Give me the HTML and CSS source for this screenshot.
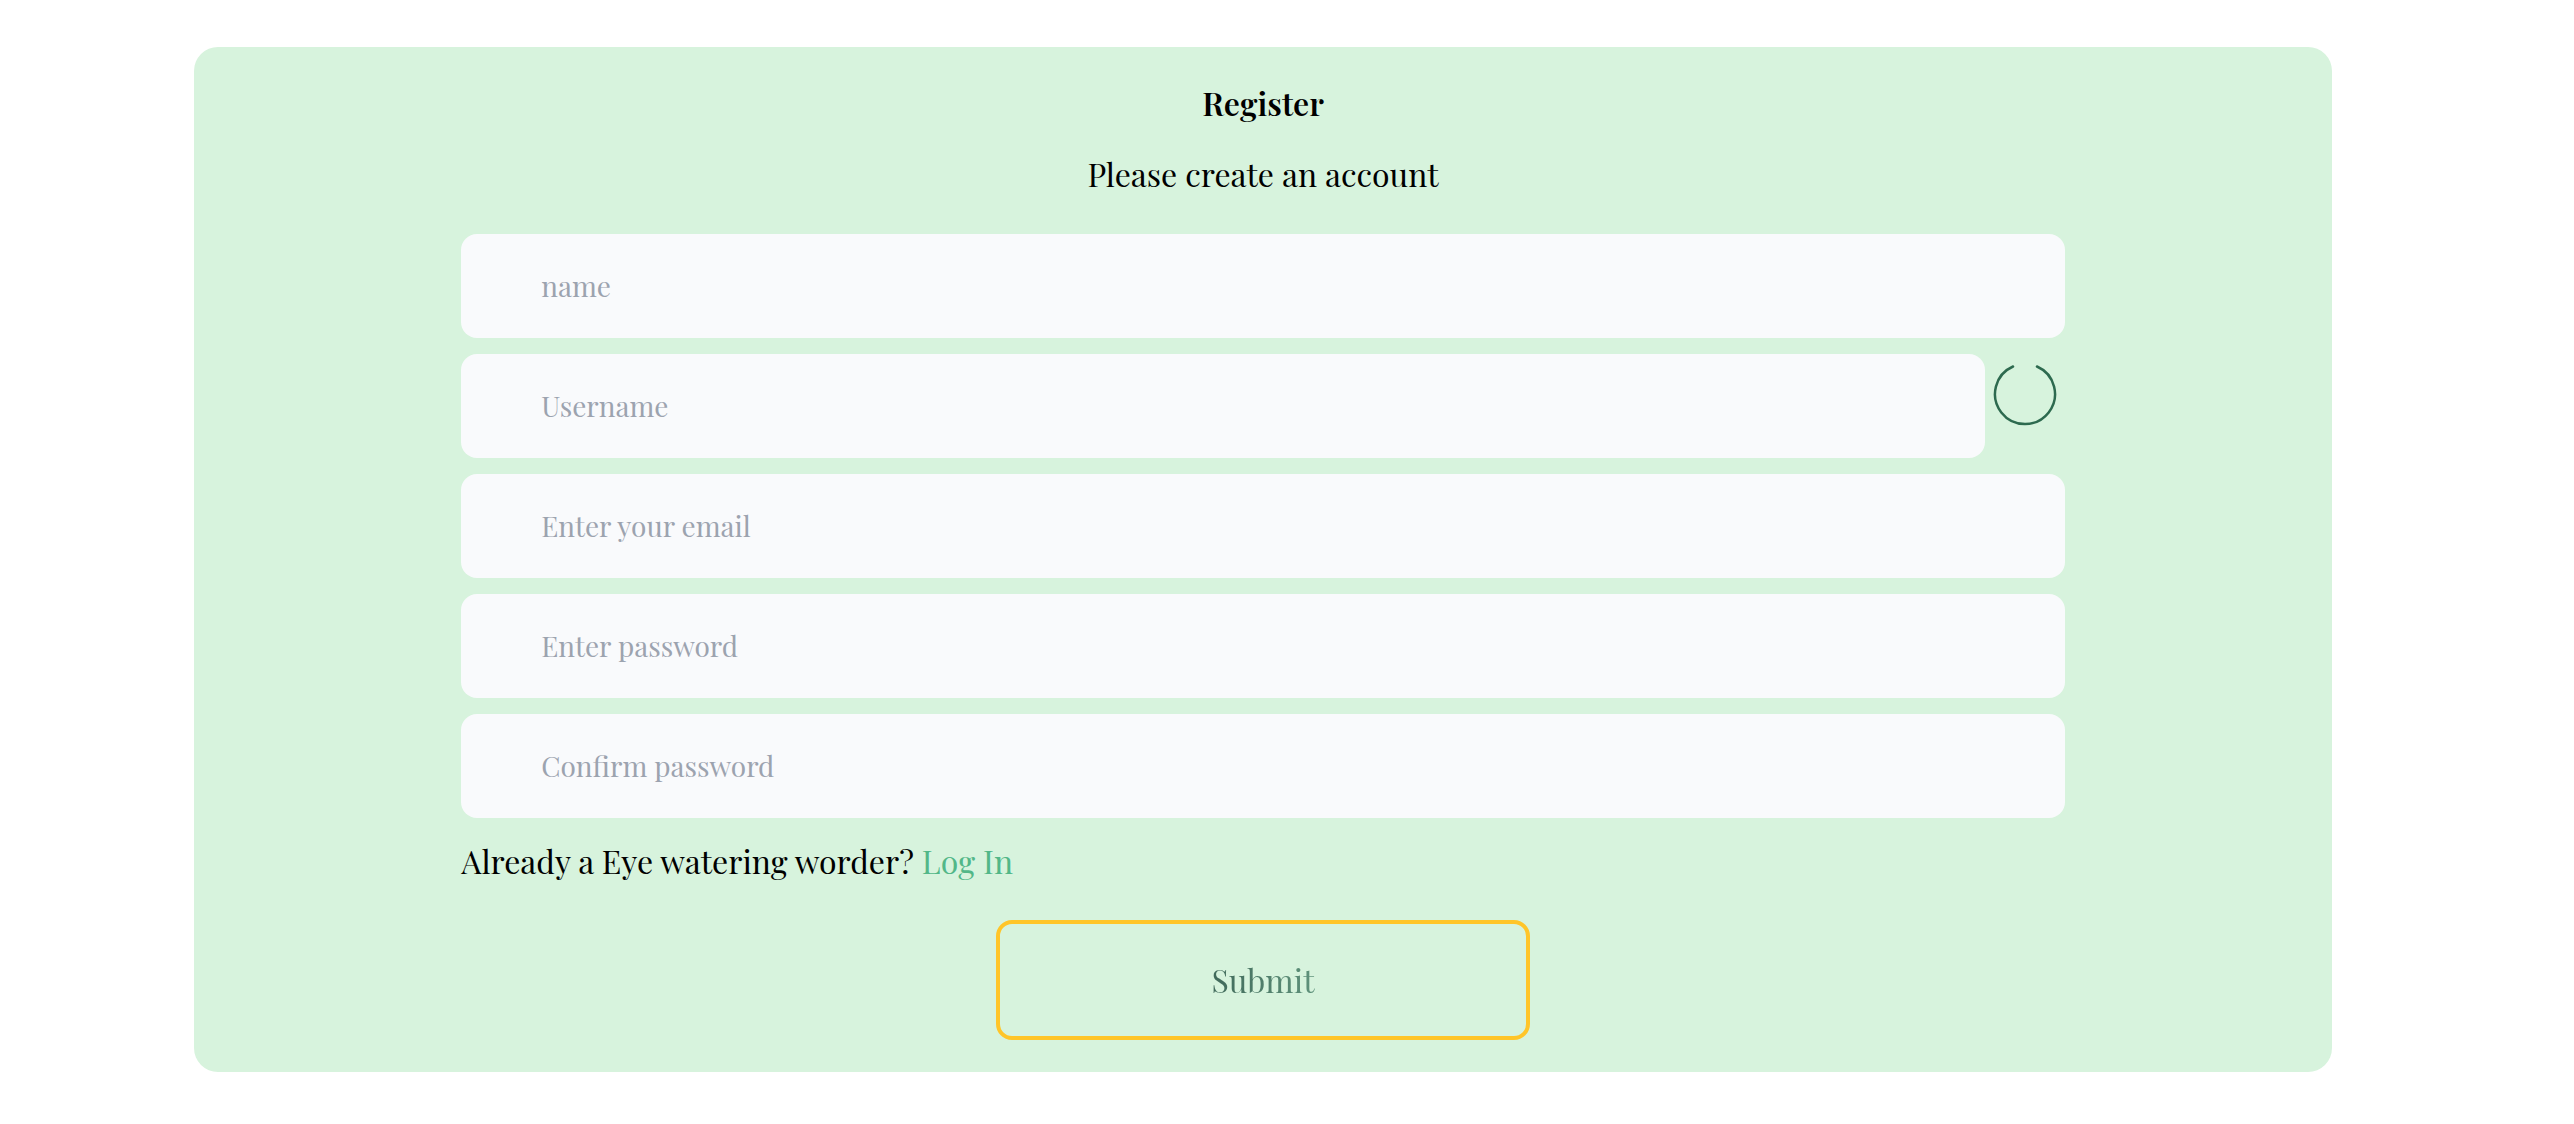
FILE: index.html
```html
<!DOCTYPE html>
<html lang="en">
<head>
<meta charset="utf-8">
<meta name="viewport" content="width=device-width, initial-scale=1">
<title>Register</title>
<link rel="stylesheet" href="styles.css">
</head>
<body>
<main class="card">
  <h1 class="title">Register</h1>
  <p class="subtitle">Please create an account</p>
  <form class="form">
    <input class="field" type="text" name="name" placeholder="name" aria-label="Name">
    <div class="field-row">
      <input class="field" type="text" name="username" placeholder="Username" aria-label="Username">
      <svg class="spinner" viewBox="0 0 80 80" role="img" aria-label="Checking username">
        <path d="M28 12.5A30 30 0 1 0 52 12.5"/>
      </svg>
    </div>
    <input class="field" type="email" name="email" placeholder="Enter your email" aria-label="Email">
    <input class="field" type="password" name="password" placeholder="Enter password" aria-label="Password">
    <input class="field" type="password" name="confirm" placeholder="Confirm password" aria-label="Confirm password">
    <p class="login">Already a Eye watering worder? <a class="login-link" href="#login">Log In</a></p>
    <button class="submit" type="submit"><span class="submit-text">Submit</span></button>
  </form>
</main>
</body>
</html>
```
FILE: styles.css
```css
* {
  box-sizing: border-box;
}

body {
  margin: 0;
  background: #fff;
  color: #000;
  font-family: "Playfair Display", "Liberation Serif", serif;
  font-size: 32px;
  line-height: 48px;
}

.card {
  margin: 47px 242px 52px 194px;
  padding: 32px 0;
  border-radius: 24px;
  background: #d7f3dd;
}

.title {
  margin: 0 0 23px;
  font-size: 32px;
  font-weight: 600;
  text-align: center;
}

.subtitle {
  margin: 0 0 36px;
  text-align: center;
}

.form {
  display: flex;
  flex-direction: column;
  gap: 16px;
  width: 75%;
  margin: 0 auto;
}

.field {
  display: block;
  width: 100%;
  height: 104px;
  padding: 0 80px 2px;
  border: 0;
  border-radius: 16px;
  background: #f9fafc;
  color: #000;
  font-family: inherit;
  font-size: 28px;
}

.field::placeholder {
  color: #9ca3af;
  opacity: 1;
}

.field-row {
  display: flex;
  align-items: flex-start;
}

.field-row .field {
  flex: 1;
  min-width: 0;
}

.spinner {
  flex: none;
  width: 80px;
  height: 80px;
  fill: none;
  stroke: #2d6a4f;
  stroke-width: 2.5;
  stroke-linecap: round;
}

.login {
  margin: 3px 0 19px;
}

.login-link {
  color: #52b788;
  text-decoration: none;
}

.submit {
  align-self: center;
  width: 33.333%;
  height: 120px;
  border: 4px solid #ffc529;
  border-radius: 16px;
  background: transparent;
  font-family: inherit;
  font-size: 32px;
  line-height: 48px;
}

.submit-text {
  background: linear-gradient(90deg, #40695a, #5f927b);
  background-clip: text;
  -webkit-background-clip: text;
  color: transparent;
}
```
